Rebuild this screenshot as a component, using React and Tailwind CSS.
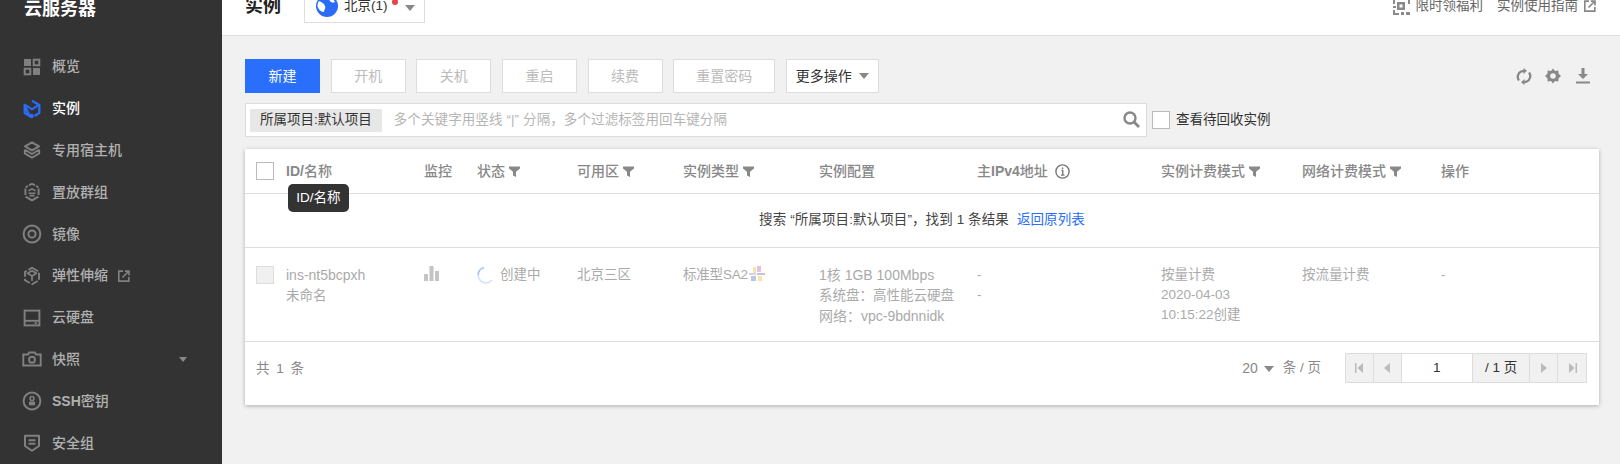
import React from "react";

const S = ({ size = 20, className = "", children, vb = "0 0 20 20" }) => (
  <svg width={size} height={size} viewBox={vb} className={`shrink-0 ${className}`} fill="none">{children}</svg>
);
const G = "#808080";
const IconGrid = () => (
  <S><rect x="2" y="2" width="7" height="7" fill={G}/><rect x="11.7" y="2.7" width="5.6" height="5.6" stroke={G} strokeWidth="2"/><rect x="2.7" y="11.7" width="5.6" height="5.6" stroke={G} strokeWidth="2"/><rect x="11" y="11" width="7" height="7" fill={G}/></S>
);
const IconCube = () => (
  <S><path d="M10 1.8 17.3 6v8L12.500 17M7.500 17 2.700 14V6Z" stroke="#2a6cf6" strokeWidth="2.300" strokeLinejoin="round"/><path d="M3.500 6.200 10 10.400l6.500-4.200" stroke="#2a6cf6" strokeWidth="2"/><circle cx="9.600" cy="17" r="2.200" fill="#2a6cf6"/></S>
);
const IconLayers = () => (
  <S><path d="M10 2.300 17 6.300 10 10.300 3 6.300Z" stroke={G} strokeWidth="2" strokeLinejoin="round"/><path d="M2.800 9.600V13.400L10 17.800 17.200 13.400V9.600M3 9.800 10 14 17 9.800" stroke={G} strokeWidth="1.900" strokeLinejoin="round"/></S>
);
const IconPlace = () => (
  <S><path d="M7 3.200 10 1.800 13 3.200M16.600 6.500V13M3.400 13V6.500M3.600 5.400 6 4M16.400 5.400 14 4M3.600 14.600 10 18.400l6.400-3.800" stroke={G} strokeWidth="1.900" strokeLinejoin="round"/><path d="M6.500 8.800 10 6.800l3.500 2M6.500 11.300h7M7.500 13.600h5" stroke={G} strokeWidth="1.600"/></S>
);
const IconDisc = () => (
  <S><circle cx="10" cy="10" r="8.400" stroke={G} strokeWidth="2"/><circle cx="10" cy="10" r="3.600" stroke={G} strokeWidth="2"/></S>
);
const IconScale = () => (
  <S><path d="M10 1.800 17 5.800v8.400l-7 4-7-4V5.800Z" stroke={G} strokeWidth="1.900" strokeLinejoin="round" strokeDasharray="7 2"/><path d="M5.500 7.300 10 10l4.500-2.700L10 4.800ZM10 10v5" stroke={G} strokeWidth="1.700" strokeLinejoin="round"/></S>
);
const IconDisk = () => (
  <S><rect x="2.600" y="2.600" width="14.800" height="14.800" stroke={G} strokeWidth="1.900"/><path d="M3 12.800h14" stroke={G} strokeWidth="1.900"/><rect x="12.500" y="14.300" width="2.500" height="1.600" fill={G}/></S>
);
const IconCamera = () => (
  <S><path d="M1.300 5.500H6L7.200 3.500H12.800L14 5.500h4.700V16.500H1.300Z" stroke={G} strokeWidth="1.900"/><circle cx="10" cy="10.800" r="3" stroke={G} strokeWidth="1.900"/></S>
);
const IconKey = () => (
  <S><circle cx="10" cy="10" r="8.400" stroke={G} strokeWidth="2"/><circle cx="10" cy="7.500" r="2" stroke={G} strokeWidth="1.500"/><rect x="7" y="10.500" width="6" height="3.800" fill={G}/></S>
);
const IconShield = () => (
  <S><path d="M3 2.800h14V13L10 17.800 3 13Z" stroke={G} strokeWidth="2" strokeLinejoin="round"/><path d="M6.500 7.300h7M6.500 10.800h7" stroke={G} strokeWidth="1.900"/></S>
);
const External = ({ c = "#808080", size = 12 }) => (
  <S size={size} vb="0 0 12 12"><path d="M5 1.200H.8V11.200H10.800V7" stroke={c} strokeWidth="1.700"/><path d="M4.500 7.500 10 2M6.800 1.200h4.200v4.200" stroke={c} strokeWidth="1.700"/></S>
);
const Funnel = () => (
  <svg width="11" height="11" viewBox="0 0 11 11" className="shrink-0"><path d="M0 .5h11v2L7 5.700V11L4 9.500V5.700L0 2.500Z" fill="#888"/></svg>
);
const B = ({ children }) => <span className="font-bold">{children}</span>;

const nav = [
  [IconGrid, "概览"], [IconCube, "实例", true], [IconLayers, "专用宿主机"], [IconPlace, "置放群组"], [IconDisc, "镜像"],
  [IconScale, "弹性伸缩", false, "ext"], [IconDisk, "云硬盘"], [IconCamera, "快照", false, "arrow"], [IconKey, <><B>SSH</B>密钥</>], [IconShield, "安全组"],
];

const Head = ({ children, filter }) => (
  <div className="flex items-center gap-[4px] font-medium text-[#888] whitespace-nowrap">{children}{filter && <Funnel />}</div>
);
const Btn = ({ children, w = "w-[75px]" }) => (
  <div className={`${w} h-[34px] flex items-center justify-center bg-white border border-[#ddd] text-[#bbb] text-[14px]`}>{children}</div>
);
const cols = "grid grid-cols-[30px_138px_53px_100px_106px_136px_158px_184px_141px_139px_1fr] pl-[11px]";
const Pager = ({ children, w = "w-[28px]", cls = "" }) => (
  <div className={`${w} h-full flex items-center justify-center border-r border-[#ddd] ${cls}`}>{children}</div>
);

export default function App() {
  return (
    <div className="w-[1620px] h-[464px] overflow-hidden flex bg-[#f1f1f1] text-[14px] font-['Liberation_Sans','Noto_Sans_CJK_SC',sans-serif]">
      <aside className="w-[222px] shrink-0 h-full bg-[#333] overflow-hidden">
        <div className="h-[46px] pl-[24px] -mt-[10px] flex items-center text-white text-[18px] font-bold leading-none"><span className="-mt-[8px]">云服务器</span></div>
        <div className="mt-[10px]">
          {nav.map(([Icon, label, active, extra], i) => (
            <div key={i} className="h-[41.8px] flex items-center pl-[22px] pr-[35px]">
              <div className="w-[20px] flex justify-center"><Icon /></div>
              <span className={`ml-[10px] font-medium ${active ? "text-white" : "text-[#b0b0b0]"}`}>{label}</span>
              {extra === "ext" && <span className="ml-[10px]"><External /></span>}
              {extra === "arrow" && <span className="ml-auto w-0 h-0 border-x-[4.500px] border-x-transparent border-t-[5px] border-t-[#888]" />}
            </div>
          ))}
        </div>
      </aside>
      <main className="flex-1 min-w-0 flex flex-col">
        <header className="h-[36px] shrink-0 bg-white border-b border-[#ddd]">
          <div className="-mt-[12px] h-[36px] flex items-center pl-[23px] pr-[24px]">
            <span className="text-[18px] font-bold text-[#222]">实例</span>
            <div className="relative ml-[23px] w-[121px] h-[34px] border border-[#ddd] bg-white flex items-center pl-[11px]">
              <svg width="22" height="22" viewBox="0 0 22 22" className="shrink-0"><circle cx="11" cy="11" r="11" fill="#2a6cf6"/><path d="M3 6c2 1 5 2 6 5s-1 3-1 6c-3 0-6-3-6.500-6 0-2 .5-4 1.500-5ZM14 3c2 0 4 2 5 4-2 1-4 .5-5-1s-1-2 0-3Z" fill="#fff"/></svg>
              <span className="ml-[6px] text-[#333] text-[13.500px]">北京(1)</span>
              <span className="absolute left-[87px] top-[9px] w-[6px] h-[6px] rounded-full bg-[#e54545]" />
              <span className="absolute left-[100px] top-[15px] w-0 h-0 border-x-[5px] border-x-transparent border-t-[6px] border-t-[#888]" />
            </div>
            <div className="ml-auto flex items-center text-[#666] text-[13.500px]">
              <svg width="17" height="17" viewBox="0 0 17 17" className="shrink-0"><path d="M0 0h6v2H2v4H0ZM8 0h9v6h-2V2H8ZM4 4h8v8H4ZM0 8h3v2H0ZM0 12h2v3h4v2H0ZM8 14h3v3H8ZM13 14h4v3h-4Z" fill="#8a8a8a"/><rect x="6.500" y="6.500" width="3" height="3" fill="#fff"/></svg>
              <span className="ml-[6px]">限时领福利</span>
              <span className="ml-[14px]">实例使用指南</span>
              <span className="ml-[6px]"><External c="#888" /></span>
            </div>
          </div>
        </header>
        <div className="flex-1 pl-[23px] pr-[21px] pt-[23px]">
          <div className="flex items-center gap-[10.650px]">
            <div className="w-[75px] h-[34px] flex items-center justify-center bg-[#2a6ffb] text-white">新建</div>
            <Btn>开机</Btn><Btn>关机</Btn><Btn>重启</Btn><Btn>续费</Btn><Btn w="w-[102px]">重置密码</Btn>
            <div className="w-[93px] h-[34px] flex items-center justify-center gap-[7px] bg-white border border-[#ddd] text-[#333]">更多操作<span className="w-0 h-0 border-x-[5px] border-x-transparent border-t-[6px] border-t-[#888]" /></div>
            <div className="ml-auto flex items-center gap-[13px] pr-[9px]">
              <svg width="16" height="17" viewBox="0 0 16 17" className="shrink-0" fill="none"><path d="M3 12.500A6 6 0 0 1 5.500 3.300L8 2.800M13 4.500A6 6 0 0 1 10.500 13.700L8 14.200" stroke="#888" strokeWidth="2.300"/><path d="M7.500 0V6L11 2.800ZM8.500 11V17L5 14.200Z" fill="#888"/></svg>
              <svg width="16" height="16" viewBox="0 0 16 16" className="shrink-0" fill="none"><path d="M8 .5 10 3l3.300-.4.300 3.200L16 8l-2.400 2.200-.3 3.200L10 13l-2 2.500L6 13l-3.300.4-.3-3.200L0 8l2.400-2.200.3-3.200L6 3Z" fill="#888"/><circle cx="8" cy="8" r="2.800" fill="#f1f1f1"/></svg>
              <svg width="14" height="16" viewBox="0 0 14 16" className="shrink-0 ml-[2px]"><path d="M5.500 0h3v6H12L7 11 2 6h3.500ZM0 13.500h14V15.500H0Z" fill="#888"/></svg>
            </div>
          </div>
          <div className="flex items-center mt-[10px] h-[34px]">
            <div className="w-[902px] h-full bg-white border border-[#ddd] flex items-center pl-[4px] pr-[6px]">
              <span className="h-[23px] px-[10px] bg-[#e7e7e7] text-[#333] flex items-center text-[13.500px]">所属项目:默认项目</span>
              <span className="ml-[12px] text-[#b5b5b5] text-[13.500px] tracking-[0.1px]">多个关键字用竖线 “|” 分隔，多个过滤标签用回车键分隔</span>
              <svg width="17" height="17" viewBox="0 0 17 17" className="ml-auto -mt-[1px] shrink-0" fill="none"><circle cx="7" cy="7" r="5.500" stroke="#888" strokeWidth="2.400"/><path d="M11 11l5 5" stroke="#888" strokeWidth="2.800"/></svg>
            </div>
            <span className="ml-[5px] w-[18px] h-[18px] bg-white border border-[#bbb]" />
            <span className="ml-[6px] text-[#333] text-[13.500px]">查看待回收实例</span>
          </div>
          <section className="relative mt-[12px] w-[1354px] h-[256px] bg-white shadow-[0_1px_4px_rgba(0,0,0,0.28)] flex flex-col">
            <div className={`${cols} h-[45px] items-center border-b border-[#ddd]`}>
              <span className="w-[18px] h-[18px] border border-[#bbb] bg-white" />
              <Head><span><B>ID/</B>名称</span></Head>
              <Head>监控</Head>
              <Head filter>状态</Head>
              <Head filter>可用区</Head>
              <Head filter>实例类型</Head>
              <Head>实例配置</Head>
              <Head><span>主<B>IPv4</B>地址</span>
                <svg width="15" height="15" viewBox="0 0 15 15" className="ml-[3px] shrink-0" fill="none"><circle cx="7.500" cy="7.500" r="6.600" stroke="#777" strokeWidth="1.400"/><path d="M6.500 6.500h1.300v4.500M6 11.200h3.500" stroke="#777" strokeWidth="1.300"/><rect x="6.800" y="3.500" width="1.500" height="1.500" fill="#777"/></svg>
              </Head>
              <Head filter>实例计费模式</Head>
              <Head filter>网络计费模式</Head>
              <Head>操作</Head>
            </div>
            <div className="absolute left-[43px] top-[35px] w-[61px] h-[28px] rounded-[5px] bg-[#333] text-white flex items-center justify-center text-[13.500px]">ID/名称</div>
            <div className="h-[54px] flex items-center justify-center border-b border-[#ddd] text-[#444] text-[13.500px] tracking-[0.1px] whitespace-pre">
              搜索 “所属项目:默认项目”，找到 1 条结果<span className="ml-[8px] text-[#2a6ffb]">返回原列表</span>
            </div>
            <div className={`${cols} h-[94px] pt-[17px] border-b border-[#ddd] text-[#aaa] text-[13.500px] leading-[20px]`}>
              <span className="mt-[1px] w-[18px] h-[18px] border border-[#ddd] bg-[#f0f0f0]" />
              <div><span className="text-[14px]">ins-nt5bcpxh</span><br />未命名</div>
              <div className="pt-[1px]">
                <svg width="15" height="15" viewBox="0 0 15 15"><path d="M0 8h4v7H0ZM5.500 0h4v15h-4ZM11 5h4v10h-4Z" fill="#c4c4c4"/></svg>
              </div>
              <div className="flex items-start gap-[5px]">
                <svg width="18" height="18" viewBox="0 0 18 18" className="mt-[1px] shrink-0" fill="none"><path d="M1.200 9A7.800 7.800 0 0 0 15 14" stroke="#d6e3fd" strokeWidth="1.800" /><path d="M1.200 9A7.800 7.800 0 0 1 7 1.500" stroke="#a9c4fa" strokeWidth="1.800"/></svg>
                创建中
              </div>
              <div>北京三区</div>
              <div className="flex items-start"><span className="tracking-[-0.2px]">标准型SA2</span>
                <svg width="17" height="16" viewBox="0 0 17 16" className="mt-[1px] shrink-0 blur-[0.6px]"><rect x="1" y="7" width="7" height="2" fill="#d8d0ef"/><rect x="5" y="1" width="3" height="6" fill="#f2e7a8"/><rect x="9" y="0" width="4" height="6" fill="#e6bfe0"/><rect x="9" y="7" width="8" height="2" fill="#c6bce8"/><rect x="3" y="10" width="5" height="5" fill="#b9c8dc"/><rect x="10" y="10" width="4" height="5" fill="#f2e7a8"/></svg>
              </div>
              <div><span className="text-[14px]">1核 1GB 100Mbps</span><br />系统盘：高性能云硬盘<br /><span className="text-[14px]">网络：vpc-9bdnnidk</span></div>
              <div>-<br />-</div>
              <div>按量计费<br />2020-04-03<br />10:15:22创建</div>
              <div>按流量计费</div>
              <div>-</div>
            </div>
            <div className="flex-1 flex items-start pt-[11px] pl-[11px] pr-[12px] text-[#888] text-[13.500px]">
              <span className="h-[30px] mt-[1px] flex items-center tracking-[1.500px] whitespace-pre">共 1 条</span>
              <span className="ml-auto h-[30px] flex items-center text-[14px]">20</span>
              <span className="ml-[6px] mt-[13px] w-0 h-0 border-x-[5px] border-x-transparent border-t-[6px] border-t-[#888]" />
              <span className="ml-[9px] h-[30px] flex items-center whitespace-pre">条 / 页</span>
              <div className="ml-[24px] w-[242px] h-[30px] flex border border-[#ddd] bg-[#f1f1f1]">
                <Pager><svg width="9" height="10" viewBox="0 0 9 10"><path d="M0 0h1.500v10H0ZM8 0v10L2.500 5Z" fill="#bbb"/></svg></Pager>
                <Pager><svg width="6" height="10" viewBox="0 0 6 10"><path d="M6 0v10L0 5Z" fill="#bbb"/></svg></Pager>
                <Pager w="w-[72px]" cls="bg-white text-[#333]">1</Pager>
                <Pager w="w-[58px]" cls="text-[#333] whitespace-pre">/ 1 页</Pager>
                <Pager><svg width="6" height="10" viewBox="0 0 6 10"><path d="M0 0v10L6 5Z" fill="#bbb"/></svg></Pager>
                <Pager cls="border-r-0"><svg width="9" height="10" viewBox="0 0 9 10"><path d="M1 0v10L6.500 5ZM7.500 0H9v10H7.500Z" fill="#bbb"/></svg></Pager>
              </div>
            </div>
          </section>
        </div>
      </main>
    </div>
  );
}
